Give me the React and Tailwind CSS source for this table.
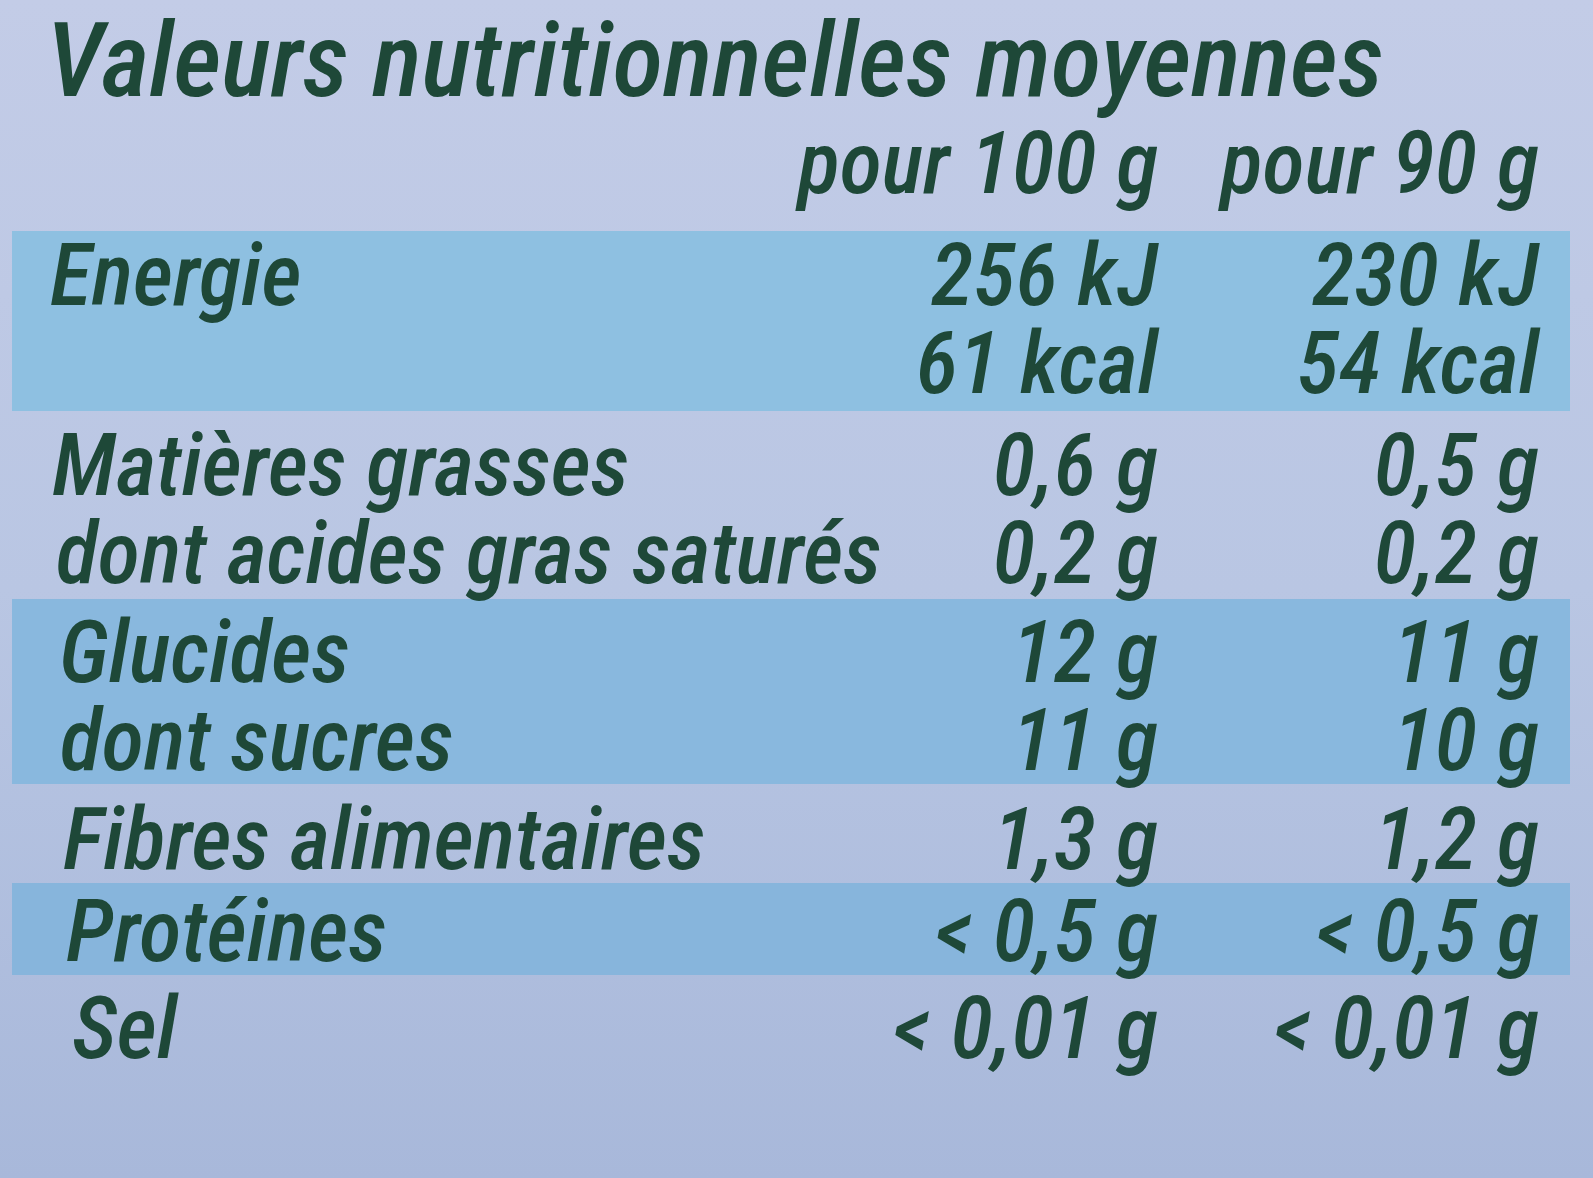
const font = "font-['Roboto',sans-serif] italic font-medium [font-stretch:75%] text-[#1e4838]"

const Line = ({ label, a, b, indent = 0 }) => (
  <div className="flex h-[88px] items-center leading-[88px] text-[87px]">
    <span className="flex-1 min-w-0 pl-[38px] whitespace-nowrap">
      <span style={{ marginLeft: indent }}>{label}</span>
    </span>
    <span className="w-[360px] text-right whitespace-nowrap">{a}</span>
    <span className="w-[412px] pr-[31px] text-right whitespace-nowrap">{b}</span>
  </div>
)

export default function App() {
  return (
    <div className={`w-full h-screen overflow-hidden bg-gradient-to-b from-[#c3cce7] via-[#b9c6e3] to-[#a8b8da] ${font}`}>
      <div className="pl-[46px] h-[119px] text-[104px] leading-[122px] whitespace-nowrap">
        Valeurs nutritionnelles moyennes
      </div>
      <div className="ml-[12px] w-[1558px]">
        <Line label="" a="pour 100 g" b="pour 90 g" />
        <div className="mt-[24px] bg-[#8ec0e1] pb-[4px]">
          <Line label="Energie" a="256 kJ" b="230 kJ" />
          <Line label="" a="61 kcal" b="54 kcal" />
        </div>
        <div className="pt-[10px] pb-[2px]">
          <Line label="Matières grasses" a="0,6 g" b="0,5 g" indent={2} />
          <Line label="dont acides gras saturés" a="0,2 g" b="0,2 g" indent={6} />
        </div>
        <div className="bg-[#89b8de] pt-[9px]">
          <Line label="Glucides" a="12 g" b="11 g" indent={9} />
          <Line label="dont sucres" a="11 g" b="10 g" indent={10} />
        </div>
        <div className="pt-[11px]">
          <Line label="Fibres alimentaires" a="1,3 g" b="1,2 g" indent={13} />
        </div>
        <div className="bg-[#87b5dc] pt-[4px]">
          <Line label="Protéines" a="< 0,5 g" b="< 0,5 g" indent={16} />
        </div>
        <div className="pt-[9px]">
          <Line label="Sel" a="< 0,01 g" b="< 0,01 g" indent={22} />
        </div>
      </div>
    </div>
  )
}
